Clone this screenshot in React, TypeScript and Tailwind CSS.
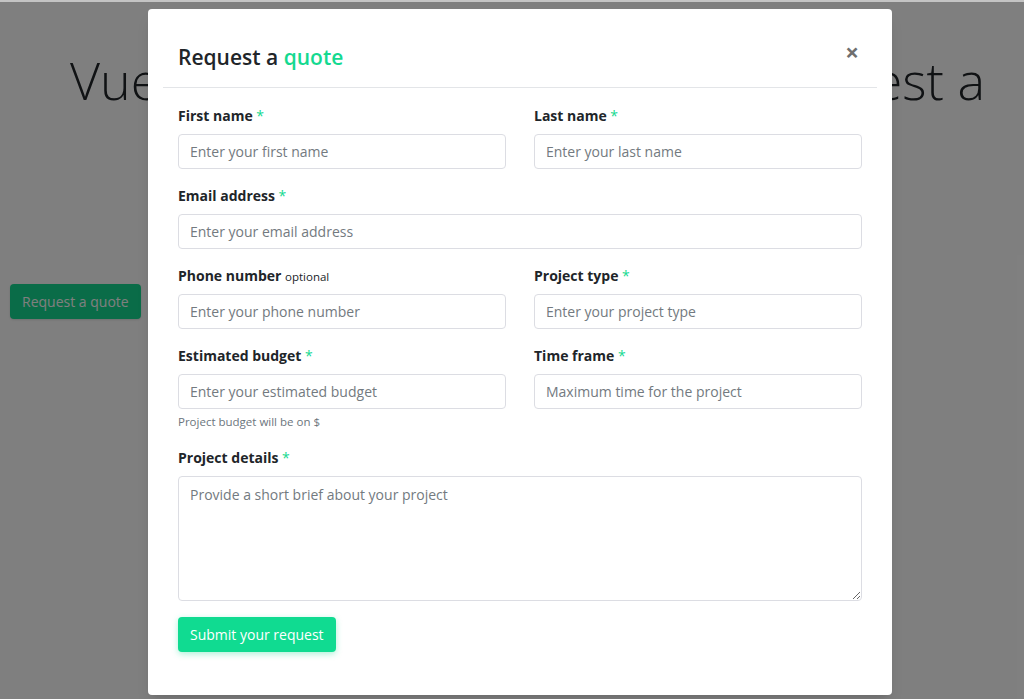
import React from 'react';

const font = { fontFamily: '"Open Sans", "Noto Sans", sans-serif' };

const Req = () => <span className="text-[#14d990] font-normal"> *</span>;

const Field: React.FC<{ label: React.ReactNode; placeholder: string; help?: string }> = ({ label, placeholder, help }) => (
  <div className="mb-[16px]">
    <label className="block text-[14px] leading-[22px] font-bold text-[#212529] mb-[7px]">{label}</label>
    <input
      type="text"
      placeholder={placeholder}
      className="block w-full h-[35px] px-[11px] border border-[#dcdde3] rounded-[4px] text-[14px] text-[#495057] placeholder:text-[#737a80] outline-none"
    />
    {help && <p className="mt-[4px] text-[11.5px] leading-[18px] text-[#6c757d]">{help}</p>}
  </div>
);

export default function App() {
  return (
    <div className="relative w-[1024px] h-[699px] overflow-hidden bg-white" style={font}>
      {/* page behind the modal */}
      <div className="h-[2px] bg-[#7a7a7a]" />
      <h1 className="mt-[46px] flex justify-between pl-[70px] pr-[39px] text-[52px] leading-[64px] font-light text-[#212529]">
        <span>Vue.js form</span>
        <span>Request a</span>
      </h1>
      <button className="ml-[10px] mt-[172px] h-[35px] px-[12px] rounded-[4px] bg-[#14d990] text-white text-[14px] shadow">
        Request a quote
      </button>

      {/* backdrop */}
      <div className="absolute inset-0 bg-black/50" />
      <div className="absolute top-0 left-0 right-0 h-[2px] bg-[#c4c4c4]" />

      {/* modal */}
      <div className="absolute left-[148px] top-[9px] w-[744px] h-[686px] bg-white rounded-[4px] shadow-lg">
        <div className="mx-[15px] px-[15px] pt-[33px] pb-[15px] border-b border-[#e3e5e8] flex items-center justify-between">
          <h2 className="text-[21px] leading-[30px] font-semibold text-[#212529]">
            Request a <span className="text-[#14d990]">quote</span>
          </h2>
          <button className="text-[24px] leading-none font-bold text-[#6f6f6f] -mt-[10px] mr-[3px]">×</button>
        </div>

        <form className="px-[30px] pt-[17px]" onSubmit={(e) => e.preventDefault()}>
          <div className="grid grid-cols-2 gap-x-[28px]">
            <Field label={<>First name<Req /></>} placeholder="Enter your first name" />
            <Field label={<>Last name<Req /></>} placeholder="Enter your last name" />
          </div>
          <Field label={<>Email address<Req /></>} placeholder="Enter your email address" />
          <div className="grid grid-cols-2 gap-x-[28px]">
            <Field
              label={<>Phone number <span className="text-[11.5px] leading-[12px] font-normal">optional</span></>}
              placeholder="Enter your phone number"
            />
            <Field label={<>Project type<Req /></>} placeholder="Enter your project type" />
            <Field
              label={<>Estimated budget<Req /></>}
              placeholder="Enter your estimated budget"
              help="Project budget will be on $"
            />
            <Field label={<>Time frame<Req /></>} placeholder="Maximum time for the project" />
          </div>
          <div className="mb-[16px]">
            <label className="block text-[14px] leading-[22px] font-bold text-[#212529] mb-[7px]">
              Project details<Req />
            </label>
            <textarea
              placeholder="Provide a short brief about your project"
              className="block w-full h-[125px] px-[11px] py-[7px] border border-[#dcdde3] rounded-[4px] text-[14px] text-[#495057] placeholder:text-[#737a80] outline-none resize-y"
            />
          </div>
          <button className="h-[35px] px-[12px] rounded-[4px] bg-[#10db91] text-white text-[14px] shadow-[0_2px_6px_rgba(16,219,145,0.35)]">
            Submit your request
          </button>
        </form>
      </div>
    </div>
  );
}
